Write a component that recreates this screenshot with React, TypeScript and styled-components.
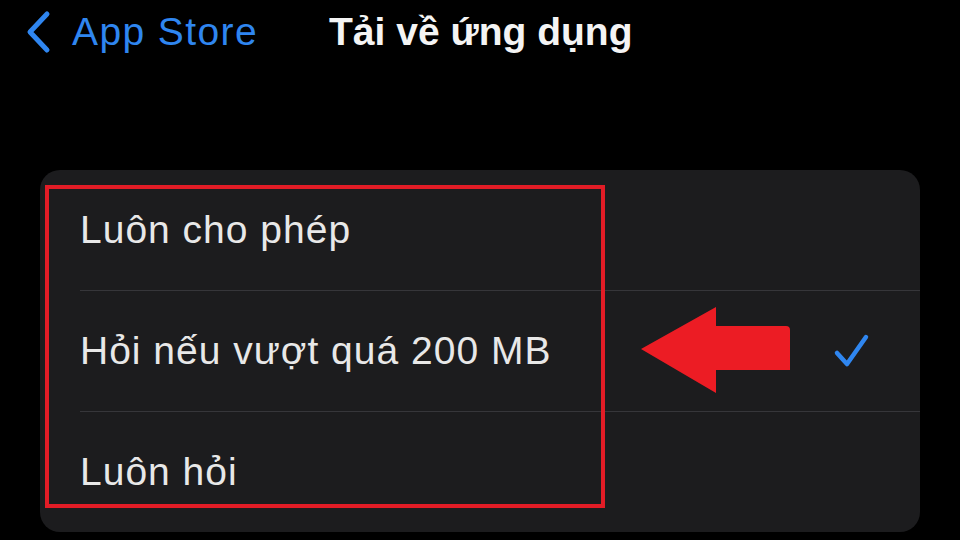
import React from 'react';
import styled, { createGlobalStyle } from 'styled-components';

const GlobalStyle = createGlobalStyle`
  html, body {
    margin: 0;
    padding: 0;
    background: #000;
  }
  body {
    font-family: "Liberation Sans", Arial, sans-serif;
    width: 960px;
    height: 540px;
    overflow: hidden;
  }
`;

const options = [
  { label: 'Luôn cho phép', selected: false },
  { label: 'Hỏi nếu vượt quá 200 MB', selected: true },
  { label: 'Luôn hỏi', selected: false },
];

const App = () => {
  return (
    <>
      <GlobalStyle />
      <Screen>
        <NavBar>
          <BackButton>
            <svg width="30" height="44" viewBox="0 0 30 44">
              <path d="M25 4 L8 22 L25 40" fill="none" stroke="#2f86f0" strokeWidth="5" strokeLinecap="round" strokeLinejoin="round" />
            </svg>
            <BackLabel>App Store</BackLabel>
          </BackButton>
          <Title>Tải về ứng dụng</Title>
        </NavBar>

        <Card>
          {options.map((opt, i) => (
            <Row key={opt.label} $last={i === options.length - 1}>
              <RowLabel>{opt.label}</RowLabel>
              {opt.selected && (
                <Check width="40" height="40" viewBox="0 0 40 40">
                  <path d="M5 22 L15 33 L34 6" fill="none" stroke="#2f86f0" strokeWidth="4.5" strokeLinecap="round" strokeLinejoin="round" />
                </Check>
              )}
            </Row>
          ))}
          <Highlight />
          <Arrow width="152" height="88" viewBox="0 0 152 88">
            <path d="M1 43 L76 1 L76 20 L146 20 Q150 20 150 24 L150 64 L76 64 L76 87 Z" fill="#ec1c24" />
          </Arrow>
        </Card>
      </Screen>
    </>
  );
};

const Screen = styled.div`
  width: 960px;
  height: 540px;
  background: #000;
  display: flex;
  flex-direction: column;
`;

const NavBar = styled.div`
  height: 64px;
  display: flex;
  align-items: center;
  padding-left: 22px;
  gap: 71px;
`;

const BackButton = styled.div`
  display: flex;
  align-items: center;
  gap: 20px;
`;

const BackLabel = styled.span`
  color: #2f86f0;
  font-size: 39px;
  letter-spacing: 1.4px;
`;

const Title = styled.h1`
  margin: 0;
  color: #f4f4f4;
  font-size: 39px;
  font-weight: 700;
`;

const Card = styled.div`
  position: relative;
  margin: 106px 40px 0 40px;
  background: #1c1c1e;
  border-radius: 20px;
  display: flex;
  flex-direction: column;
`;

const Row = styled.div<{ $last: boolean }>`
  height: 120px;
  margin-left: 40px;
  padding-right: 48px;
  display: flex;
  align-items: center;
  justify-content: space-between;
  border-bottom: ${p => (p.$last ? 'none' : '1.5px solid #36363a')};
`;

const RowLabel = styled.span`
  color: #e8e8e8;
  font-size: 39px;
  letter-spacing: 1px;
`;

const Check = styled.svg`
  display: block;
`;

const Highlight = styled.div`
  position: absolute;
  left: 5px;
  top: 15px;
  width: 552px;
  height: 315px;
  border: 4px solid #e21c26;
  pointer-events: none;
`;

const Arrow = styled.svg`
  position: absolute;
  left: 600px;
  top: 136px;
`;

export default App;
